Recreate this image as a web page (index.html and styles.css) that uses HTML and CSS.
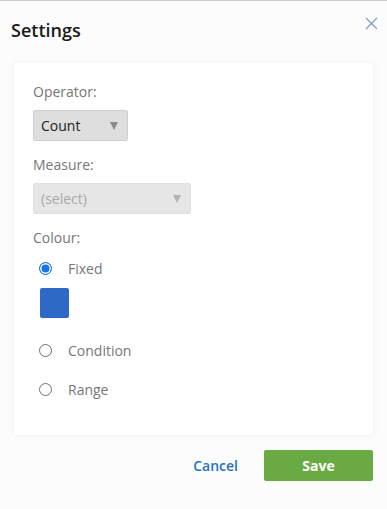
FILE: index.html
```html
<!DOCTYPE html>
<html lang="en">
<head>
  <meta charset="UTF-8">
  <meta name="viewport" content="width=device-width, initial-scale=1.0">
  <title>Settings</title>
  <link rel="stylesheet" href="styles.css">
</head>
<body>
  <div class="dialog">
    <div class="dialog-header">
      <h1>Settings</h1>
      <button class="close" aria-label="Close">
        <svg width="13" height="13" viewBox="0 0 13 13">
          <path d="M1 1L12 12M12 1L1 12" stroke="#7f9cbd" stroke-width="1.2" fill="none"/>
        </svg>
      </button>
    </div>

    <div class="card">
      <div class="field-label">Operator:</div>
      <div class="select select-operator">
        <span>Count</span>
        <span class="caret"></span>
      </div>

      <div class="field-label">Measure:</div>
      <div class="select select-measure disabled">
        <span>(select)</span>
        <span class="caret"></span>
      </div>

      <div class="field-label">Colour:</div>
      <label class="radio-row">
        <span class="radio checked"></span>
        <span>Fixed</span>
      </label>
      <div class="swatch"></div>
      <label class="radio-row condition">
        <span class="radio"></span>
        <span>Condition</span>
      </label>
      <label class="radio-row range">
        <span class="radio"></span>
        <span>Range</span>
      </label>
    </div>

    <div class="dialog-footer">
      <button class="btn-link">Cancel</button>
      <button class="btn-save">Save</button>
    </div>
  </div>
</body>
</html>
```

FILE: styles.css
```css
body {
  margin: 0;
  font-family: 'Open Sans', 'Noto Sans', sans-serif;
  background-color: #fcfcfc;
  color: #333;
}

.dialog {
  border-top: 1px solid #cfcfcf;
  height: 508px;
  position: relative;
}

.dialog-header {
  padding: 16px 11px 0;
  height: 46px;
}

.dialog-header h1 {
  margin: 0;
  font-size: 18px;
  font-weight: 600;
  line-height: 26px;
  color: #1a1a1a;
}

.close {
  position: absolute;
  top: 16px;
  right: 9px;
  border: none;
  background: none;
  padding: 0;
  cursor: pointer;
}

.card {
  margin: 0 14px;
  background: #fff;
  border-radius: 4px;
  box-shadow: 0 0 8px rgba(0, 0, 0, 0.05);
  padding: 19px 19px 36px;
  height: 317px;
}

.field-label {
  font-size: 14px;
  line-height: 20px;
  color: #767676;
  margin-bottom: 8px;
}

.select {
  display: flex;
  align-items: center;
  justify-content: space-between;
  box-sizing: border-box;
  height: 31px;
  padding: 0 9px 0 7px;
  border: 1px solid #d0d0d0;
  border-radius: 2px;
  background: #dedede;
  font-size: 14px;
  color: #222;
  margin-bottom: 14px;
}

.select-operator {
  width: 95px;
}

.select-measure {
  width: 158px;
}

.select.disabled {
  background: #e6e6e6;
  border-color: #e0e0e0;
  color: #a9a9a9;
}

.caret {
  width: 0;
  height: 0;
  border-left: 4.5px solid transparent;
  border-right: 4.5px solid transparent;
  border-top: 8px solid #8a8a8a;
}

.select.disabled .caret {
  border-top-color: #b4b4b4;
}

.radio-row {
  display: flex;
  align-items: center;
  height: 20px;
  font-size: 14px;
  color: #777;
  margin-top: 10px;
}

.radio {
  width: 13px;
  height: 13px;
  border: 1.5px solid #707070;
  border-radius: 50%;
  box-sizing: border-box;
  margin: 0 16px 0 6px;
}

.radio.checked {
  border: 1.5px solid #1a73e8;
  background: #1a73e8;
  box-shadow: inset 0 0 0 1.5px #fff;
}

.swatch {
  width: 29px;
  height: 30px;
  margin: 10px 0 0 7px;
  border-radius: 2px;
  background: #2f69c8;
}

.radio-row.condition {
  margin-top: 22px;
}

.radio-row.range {
  margin-top: 19px;
}

.dialog-footer {
  display: flex;
  justify-content: flex-end;
  align-items: center;
  gap: 26px;
  padding: 15px 14px 0;
}

.btn-link {
  border: none;
  background: none;
  padding: 0;
  font-family: inherit;
  font-size: 14px;
  font-weight: 600;
  color: #1f74bf;
  cursor: pointer;
}

.btn-save {
  width: 109px;
  height: 31px;
  border: none;
  border-radius: 2px;
  background: #6aaa43;
  color: #fff;
  font-family: inherit;
  font-size: 14px;
  font-weight: 700;
  cursor: pointer;
}
```
